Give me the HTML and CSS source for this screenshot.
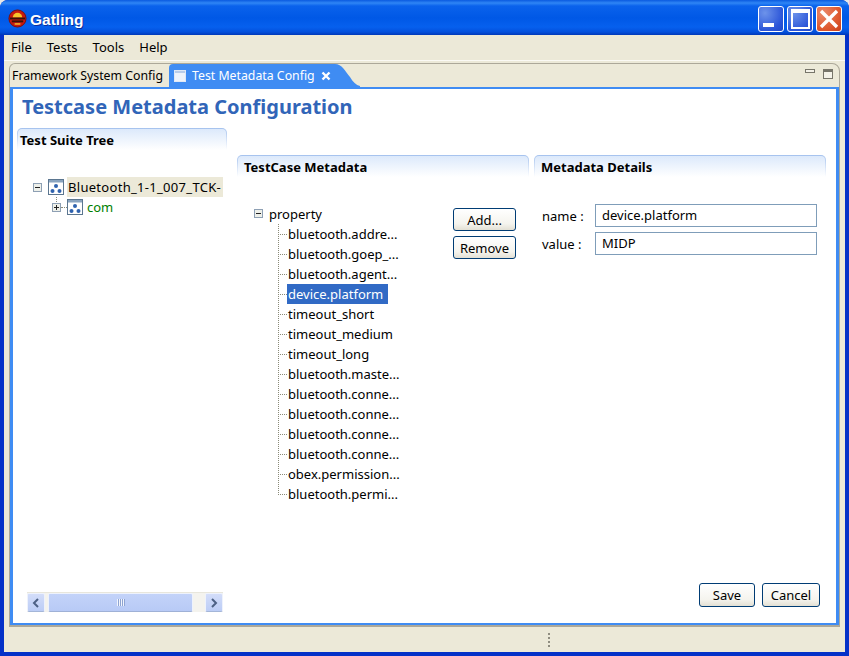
FILE: index.html
```html
<!DOCTYPE html>
<html>
<head>
    <meta charset="utf-8">
    <title>Gatling</title>
    <link rel="stylesheet" href="styles.css">
</head>
<body>
    <div class="window">
        <!--title bar-->
        <div class="titlebar">
            <svg class="app-icon" width="19" height="19" viewBox="0 0 20 20">
                <circle cx="10" cy="10" r="9" fill="#c81a10" stroke="#7a0d08"/>
                <path d="M5 9a5 5 0 0 1 10 0z" fill="#f6c52c"/>
                <rect x="2" y="9" width="16" height="2" fill="#3a1208"/>
                <rect x="4" y="12" width="12" height="2" fill="#3a1208"/>
                <rect x="7" y="15" width="6" height="1.5" fill="#f6c52c"/>
            </svg>
            <span class="title-text">Gatling</span>
            <div class="win-btns">
                <div class="win-btn"><svg width="24" height="24" viewBox="0 0 24 24"><rect x="4" y="16" width="11" height="4" fill="#fff"/></svg></div>
                <div class="win-btn"><svg width="24" height="24" viewBox="0 0 24 24"><rect x="4" y="3" width="17" height="18" fill="none" stroke="#fff" stroke-width="2"/><rect x="4" y="3" width="17" height="3" fill="#fff"/></svg></div>
                <div class="win-btn close"><svg width="24" height="24" viewBox="0 0 24 24"><path d="M4 4L20 20M20 4L4 20" stroke="#fff" stroke-width="3.4"/></svg></div>
            </div>
        </div>
        <div class="client">
            <!--menu-->
            <div class="menubar">
                <span>File</span>
                <span>Tests</span>
                <span>Tools</span>
                <span>Help</span>
            </div>
            <!--tab folder-->
            <div class="folder">
                <div class="tabs">
                    <div class="tab">Framework System Config</div>
                    <div class="tab-active">
                        <svg class="tab-icon" width="12" height="12" viewBox="0 0 12 12"><rect x=".5" y=".5" width="11" height="11" fill="#eef3fb" stroke="#dfe8f6"/><rect x="1" y="1" width="10" height="2" fill="#b9cdea"/></svg>
                        <span class="tab-label">Test Metadata Config</span>
                        <svg class="tab-close" width="10" height="10" viewBox="0 0 10 10"><path d="M1.5 1.5L8.5 8.5M8.5 1.5L1.5 8.5" stroke="#fff" stroke-width="2.4"/></svg>
                    </div>
                    <svg class="tab-curve" width="26" height="23" viewBox="0 0 26 23"><path d="M0 0H1C8 0 11 7 16 13C19 18 22 21 26 22V23H0Z" fill="#3f8cf3"/></svg>
                    <div class="view-btns">
                        <svg width="10" height="4" viewBox="0 0 10 4"><rect x=".5" y=".5" width="9" height="3" fill="#f4f2e8" stroke="#77756a"/></svg>
                        <svg width="10" height="10" viewBox="0 0 10 10"><rect x=".5" y=".5" width="9" height="9" fill="#f4f2e8" stroke="#77756a"/><rect x="1" y="1" width="8" height="2" fill="#77756a"/></svg>
                    </div>
                </div>
                <div class="content">
                    <h1>Testcase Metadata Configuration</h1>
                    <div class="columns">
                        <!--left column-->
                        <div class="left">
                            <div class="section-head first"><span>Test Suite Tree</span></div>
                            <div class="suite-tree">
                                <div class="row">
                                    <svg class="toggle" width="9" height="9" viewBox="0 0 9 9"><rect x=".5" y=".5" width="8" height="8" fill="#eef0ea" stroke="#8ea0b4"/><path d="M2 4.5H7" stroke="#222"/></svg>
                                    <svg class="suite-icon" width="16" height="16" viewBox="0 0 16 16"><use href="#suite"/></svg>
                                    <span class="root-label">Bluetooth_1-1_007_TCK-</span>
                                </div>
                                <div class="row child">
                                    <span class="stem"></span>
                                    <svg class="toggle" width="9" height="9" viewBox="0 0 9 9"><rect x=".5" y=".5" width="8" height="8" fill="#eef0ea" stroke="#8ea0b4"/><path d="M2 4.5H7M4.5 2V7" stroke="#222"/></svg>
                                    <span class="dash"></span>
                                    <svg class="suite-icon" width="16" height="16" viewBox="0 0 16 16">
                                        <symbol id="suite" viewBox="0 0 16 16">
                                            <rect x=".5" y=".5" width="15" height="15" fill="#fff" stroke="#5b7690"/>
                                            <rect x="1" y="1" width="14" height="2.5" fill="#8aa4bf"/>
                                            <circle cx="8" cy="7" r="2" fill="#2f62ae"/>
                                            <circle cx="4.5" cy="12" r="2" fill="#2f62ae"/>
                                            <circle cx="11.5" cy="12" r="2" fill="#2f62ae"/>
                                        </symbol>
                                        <use href="#suite"/>
                                    </svg>
                                    <span class="com-label">com</span>
                                </div>
                            </div>
                            <div class="scrollbar">
                                <div class="sb-btn"><svg width="8" height="10" viewBox="0 0 8 10"><path d="M6 1L2 5L6 9" fill="none" stroke="#4d6185" stroke-width="2"/></svg></div>
                                <div class="sb-thumb"><span class="grip"></span></div>
                                <div class="sb-track"></div>
                                <div class="sb-btn"><svg width="8" height="10" viewBox="0 0 8 10"><path d="M2 1L6 5L2 9" fill="none" stroke="#4d6185" stroke-width="2"/></svg></div>
                            </div>
                        </div>
                        <!--right column-->
                        <div class="right">
                            <div class="panels">
                                <div class="panel">
                                    <div class="section-head"><span>TestCase Metadata</span></div>
                                    <div class="meta-body">
                                        <div class="prop-tree">
                                            <div class="prop-root">
                                                <svg class="toggle" width="9" height="9" viewBox="0 0 9 9"><rect x=".5" y=".5" width="8" height="8" fill="#eef0ea" stroke="#8ea0b4"/><path d="M2 4.5H7" stroke="#222"/></svg>
                                                <span>property</span>
                                            </div>
                                            <div class="prop"><span>bluetooth.addre...</span></div>
                                            <div class="prop"><span>bluetooth.goep_...</span></div>
                                            <div class="prop"><span>bluetooth.agent...</span></div>
                                            <div class="prop selected"><span>device.platform</span></div>
                                            <div class="prop"><span>timeout_short</span></div>
                                            <div class="prop"><span>timeout_medium</span></div>
                                            <div class="prop"><span>timeout_long</span></div>
                                            <div class="prop"><span>bluetooth.maste...</span></div>
                                            <div class="prop"><span>bluetooth.conne...</span></div>
                                            <div class="prop"><span>bluetooth.conne...</span></div>
                                            <div class="prop"><span>bluetooth.conne...</span></div>
                                            <div class="prop"><span>bluetooth.conne...</span></div>
                                            <div class="prop"><span>obex.permission...</span></div>
                                            <div class="prop last"><span>bluetooth.permi...</span></div>
                                        </div>
                                        <div class="side-btns">
                                            <button class="btn">Add...</button>
                                            <button class="btn">Remove</button>
                                        </div>
                                    </div>
                                </div>
                                <div class="panel">
                                    <div class="section-head"><span>Metadata Details</span></div>
                                    <div class="details">
                                        <label>name :</label>
                                        <div class="field">device.platform</div>
                                        <label>value :</label>
                                        <div class="field">MIDP</div>
                                    </div>
                                </div>
                            </div>
                            <div class="actions">
                                <button class="btn save">Save</button>
                                <button class="btn cancel">Cancel</button>
                            </div>
                        </div>
                    </div>
                </div>
            </div>
            <!--status bar-->
            <div class="statusbar"><span class="sash"></span></div>
        </div>
    </div>
</body>
</html>
```
FILE: styles.css
```css
* {
    box-sizing: border-box;
}
html, body {
    margin: 0;
    height: 100%;
    overflow: hidden;
    background: #e8e8e8;
}
body {
    font-family: "Noto Sans", "DejaVu Sans", sans-serif;
    font-size: 13px;
    color: #000;
}
svg {
    display: block;
    flex: none;
}
.window {
    width: 849px;
    height: 656px;
    display: flex;
    flex-direction: column;
    border-radius: 8px 8px 0 0;
    overflow: hidden;
    background: #0431c8;
}

/* title bar */
.titlebar {
    height: 35px;
    flex: none;
    display: flex;
    align-items: center;
    padding: 0 7px 0 8px;
    background: linear-gradient(#0a5ae0 0, #2f86f5 3px, #0a62ec 6px, #0058e6 18px, #0660ee 27px, #0350dc 32px, #0038b8 35px);
}
.app-icon {
    margin-right: 3px;
    margin-top: 1px;
}
.title-text {
    font-family: "Liberation Sans", sans-serif;
    font-size: 15.5px;
    font-weight: bold;
    color: #fff;
    text-shadow: 1px 1px 0 #0a2f9a;
    margin-top: 5px;
}
.win-btns {
    margin-left: auto;
    display: flex;
    gap: 3px;
    margin-top: 3px;
}
.win-btn {
    width: 26px;
    height: 26px;
    border: 1px solid #fff;
    border-radius: 3px;
    background: radial-gradient(circle at 25% 25%, #6d93ea, #2b55d8 70%, #1f48c8);
}
.win-btn.close {
    background: radial-gradient(circle at 25% 25%, #eb8a6c, #df5a30 60%, #c8401c);
}

.client {
    flex: 1;
    min-height: 0;
    margin: 0 4px 4px 4px;
    background: #ece9d8;
    display: flex;
    flex-direction: column;
    padding-top: 1px;
}

/* menu */
.menubar {
    height: 25px;
    flex: none;
    display: flex;
    align-items: center;
    gap: 15px;
    padding: 0 0 2px 7px;
    border-bottom: 1px solid #fbfaf5;
}

/* tabs */
.folder {
    height: 564px;
    flex: none;
    margin: 2px 5px 0 5px;
    border: 1px solid #aca899;
    border-bottom-width: 2px;
    border-radius: 6px 8px 0 0;
    display: flex;
    flex-direction: column;
}
.tabs {
    height: 23px;
    flex: none;
    display: flex;
    align-items: stretch;
    font-size: 12.3px;
}
.tab {
    width: 159px;
    padding-left: 2px;
    line-height: 23px;
    white-space: nowrap;
    overflow: hidden;
}
.tab-active {
    width: 165px;
    display: flex;
    align-items: center;
    color: #fff;
    background: #3f8cf3;
    border-radius: 4px 0 0 0;
}
.tab-icon {
    margin-left: 5px;
    margin-right: 6px;
}
.tab-label {
    white-space: nowrap;
}
.tab-close {
    margin-left: auto;
    margin-right: 3px;
}
.view-btns {
    margin-left: auto;
    display: flex;
    align-items: flex-start;
    gap: 8px;
    padding: 5px 6px 0 0;
}

/* content */
.content {
    flex: 1;
    min-height: 0;
    background: #fff;
    border: 3px solid #3f8cf3;
    border-bottom-width: 2px;
    border-top-width: 2px;
    display: flex;
    flex-direction: column;
    padding: 6px 10px 11px 4px;
}
h1 {
    margin: 0 0 9px 5px;
    font-size: 20px;
    line-height: 24px;
    font-weight: bold;
    color: #3165b8;
}
.columns {
    flex: 1;
    min-height: 0;
    display: flex;
    gap: 10px;
}
.section-head {
    height: 22px;
    padding: 1px 1px 0 1px;
    border-radius: 5px 5px 0 0;
    background: linear-gradient(#a5c2ee, #fff);
}
.section-head span {
    display: block;
    height: 21px;
    padding: 2px 0 0 6px;
    font-size: 13px;
    line-height: 19px;
    font-weight: bold;
    border-radius: 4px 4px 0 0;
    background: linear-gradient(#dce9fb, #fff);
}
.first span {
    padding-left: 2px;
}

/* left column */
.left {
    width: 210px;
    flex: none;
    display: flex;
    flex-direction: column;
}
.suite-tree {
    flex: 1;
    padding: 27px 4px 0 16px;
}
.row {
    height: 20px;
    display: flex;
    align-items: center;
}
.toggle {
    flex: none;
}
.suite-icon {
    margin-left: 6px;
}
.root-label {
    margin-left: 3px;
    flex: 1;
    height: 20px;
    padding-left: 1px;
    line-height: 20px;
    letter-spacing: .3px;
    white-space: nowrap;
    overflow: hidden;
    background: #ece9d8;
}
.child {
    padding-left: 19px;
    position: relative;
}
.stem {
    position: absolute;
    left: 23px;
    top: 0;
    height: 5px;
    border-left: 1px dotted #8a8a78;
}
.dash {
    width: 6px;
    border-top: 1px dotted #8a8a78;
}
.child .suite-icon {
    margin-left: 0;
}
.com-label {
    margin-left: 4px;
    color: #008000;
}
.scrollbar {
    height: 20px;
    flex: none;
    margin: 0 4px 0 10px;
    display: flex;
    background: #f4f3ee;
    border-top: 1px solid #e8e6dc;
}
.sb-btn {
    width: 18px;
    display: flex;
    align-items: center;
    justify-content: center;
    background: linear-gradient(#d3ddf9, #bccdf6);
    border: 1px solid #eef2fc;
    border-bottom-color: #a4b6d8;
    border-radius: 2px;
}
.sb-thumb {
    width: 145px;
    margin-left: 3px;
    display: flex;
    align-items: center;
    justify-content: center;
    background: linear-gradient(#c3d3f9, #b8caf6);
    border: 1px solid #eef2fc;
    border-bottom-color: #9fb1d6;
    border-radius: 2px;
}
.grip {
    width: 8px;
    height: 7px;
    background: repeating-linear-gradient(90deg, #f2f5fd 0 1px, #8ea4d2 1px 2px);
}
.sb-track {
    flex: 1;
}

/* right column */
.right {
    flex: 1;
    min-width: 0;
    display: flex;
    flex-direction: column;
    padding-top: 27px;
}
.panels {
    flex: 1;
    display: grid;
    grid-template-columns: 292px 292px;
    gap: 5px;
}
.meta-body {
    display: flex;
    justify-content: space-between;
    padding: 26px 13px 0 17px;
}
.prop-root {
    height: 21px;
    display: flex;
    align-items: center;
    gap: 6px;
}
.prop {
    height: 20px;
    margin-left: 24px;
    display: flex;
    align-items: center;
    padding-left: 9px;
    background:
        repeating-linear-gradient(#8a8a78 0 1px, transparent 1px 2px) 0 0 / 1px 100% no-repeat,
        repeating-linear-gradient(90deg, #8a8a78 0 1px, transparent 1px 2px) 0 50% / 9px 1px no-repeat;
}
.prop.last {
    background:
        repeating-linear-gradient(#8a8a78 0 1px, transparent 1px 2px) 0 0 / 1px 50% no-repeat,
        repeating-linear-gradient(90deg, #8a8a78 0 1px, transparent 1px 2px) 0 50% / 9px 1px no-repeat;
}
.prop span {
    height: 20px;
    line-height: 20px;
    padding: 0 5px 0 1px;
    white-space: nowrap;
}
.selected span {
    background: #316ac5;
    color: #fff;
}
.side-btns {
    width: 63px;
    display: flex;
    flex-direction: column;
    gap: 5px;
    padding-top: 5px;
}
.btn {
    height: 23px;
    padding: 0;
    font: inherit;
    color: #000;
    border: 1px solid #003c74;
    border-radius: 3px;
    background: linear-gradient(#fff, #f5f4ee 70%, #e3e0d4);
}
.details {
    display: grid;
    grid-template-columns: 53px 222px;
    row-gap: 5px;
    align-items: center;
    padding: 27px 0 0 8px;
}
.field {
    height: 23px;
    line-height: 21px;
    padding-left: 6px;
    border: 1px solid #7f9db9;
}
.actions {
    display: flex;
    justify-content: flex-end;
    gap: 7px;
    padding-right: 6px;
    padding-bottom: 5px;
}
.save {
    width: 56px;
    height: 24px;
}
.cancel {
    width: 58px;
    height: 24px;
}

/* status bar */
.statusbar {
    flex: 1;
    display: flex;
    justify-content: center;
    align-items: center;
    padding-left: 249px;
}
.sash {
    width: 2px;
    height: 14px;
    background: repeating-linear-gradient(#8f8d80 0 2px, transparent 2px 4px);
}
```
